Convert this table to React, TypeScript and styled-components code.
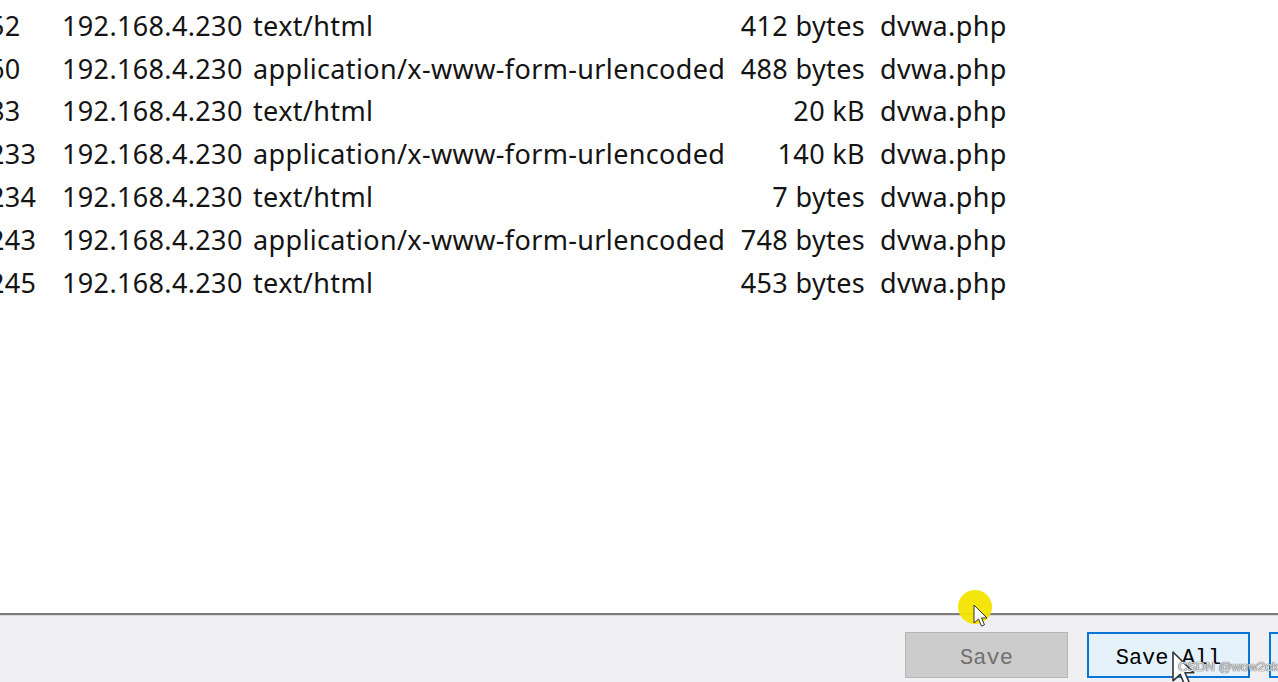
import React from "react";
import styled, { createGlobalStyle } from "styled-components";

const Global = createGlobalStyle`
  html, body { margin: 0; padding: 0; background: #ffffff; overflow: hidden; }
  #root { width: 1278px; height: 682px; }
`;

const Window = styled.div`
  position: relative;
  width: 1278px;
  height: 682px;
  display: flex;
  flex-direction: column;
  overflow: hidden;
  background: #ffffff;
`;

const List = styled.div`
  height: 613px;
  padding-top: 4px;
  box-sizing: border-box;
  background: #ffffff;
  overflow: hidden;
`;

const Row = styled.div`
  display: grid;
  grid-template-columns: 73px 191px 480px 132px 1fr;
  height: 42.8px;
  align-items: center;
  margin-left: -11px;
  font-family: "Noto Sans", "Open Sans", sans-serif;
  font-size: 27px;
  letter-spacing: 0.35px;
  color: #141414;
  white-space: nowrap;
`;

const Cell = styled.span<{ $right?: boolean; $pad?: number }>`
  text-align: ${(p) => (p.$right ? "right" : "left")};
  padding-left: ${(p) => p.$pad ?? 0}px;
  overflow: visible;
`;

const Divider = styled.div`
  height: 2px;
  background: #7d7d7d;
  border-bottom: 1px solid #d8d8d8;
`;

const ButtonBar = styled.div`
  flex: 1;
  background: #f0eff1;
  display: flex;
  align-items: flex-start;
  gap: 19px;
  padding: 16px 0 0 905px;
  overflow: hidden;
`;

const Button = styled.button<{ $variant: "disabled" | "default" | "plain" }>`
  flex: none;
  width: 163px;
  height: 46px;
  box-sizing: border-box;
  font-family: "Liberation Mono", "DejaVu Sans Mono", monospace;
  font-size: 22px;
  padding: 7px 0 0;
  cursor: default;
  border: ${(p) =>
    p.$variant === "disabled" ? "1px solid #b5b5b5" : "2px solid #0a74d6"};
  background: ${(p) =>
    p.$variant === "disabled" ? "#cccccc" : "#e5f1fb"};
  color: ${(p) => (p.$variant === "disabled" ? "#707070" : "#000000")};
`;

const Highlight = styled.div`
  position: absolute;
  left: 958px;
  top: 590px;
  width: 34px;
  height: 34px;
  border-radius: 50%;
  background: #f3e400;
  opacity: 0.95;
`;

const Cursor = styled.svg<{ $x: number; $y: number; $scale: number }>`
  position: absolute;
  left: ${(p) => p.$x}px;
  top: ${(p) => p.$y}px;
  width: ${(p) => 16 * p.$scale}px;
  height: ${(p) => 26 * p.$scale}px;
  overflow: visible;
`;

const Watermark = styled.div`
  position: absolute;
  left: 1178px;
  top: 659px;
  font-family: "Liberation Sans", Arial, sans-serif;
  font-size: 13px;
  color: #e6e6e6;
  text-shadow: 0 0 1px #444, 0 0 1px #444;
  white-space: nowrap;
`;

const rows = [
  ["52", "text/html", "412 bytes"],
  ["60", "application/x-www-form-urlencoded", "488 bytes"],
  ["83", "text/html", "20 kB"],
  ["233", "application/x-www-form-urlencoded", "140 kB"],
  ["234", "text/html", "7 bytes"],
  ["243", "application/x-www-form-urlencoded", "748 bytes"],
  ["245", "text/html", "453 bytes"],
];

const Arrow = () => (
  <path
    d="M0 0 L0 18 L4.5 14 L7.5 21 L10.5 19.8 L7.5 13 L13 13 Z"
    fill="#ffffff"
    stroke="#333333"
    strokeWidth="1"
    strokeLinejoin="round"
  />
);

export default function App() {
  return (
    <>
      <Global />
      <Window>
        <List>
          {rows.map(([n, type, size]) => (
            <Row key={n}>
              <Cell>{n}</Cell>
              <Cell>192.168.4.230</Cell>
              <Cell>{type}</Cell>
              <Cell $right>{size}</Cell>
              <Cell $pad={15}>dvwa.php</Cell>
            </Row>
          ))}
        </List>
        <Divider />
        <ButtonBar>
          <Button $variant="disabled" disabled>
            Save
          </Button>
          <Button $variant="default">Save All</Button>
          <Button $variant="plain">Close</Button>
        </ButtonBar>
        <Highlight />
        <Cursor $x={974} $y={605} $scale={1} viewBox="0 0 16 26">
          <Arrow />
        </Cursor>
        <Cursor $x={1173} $y={652} $scale={1.6} viewBox="0 0 16 26">
          <Arrow />
        </Cursor>
        <Watermark>CSDN @wow2ok</Watermark>
      </Window>
    </>
  );
}
